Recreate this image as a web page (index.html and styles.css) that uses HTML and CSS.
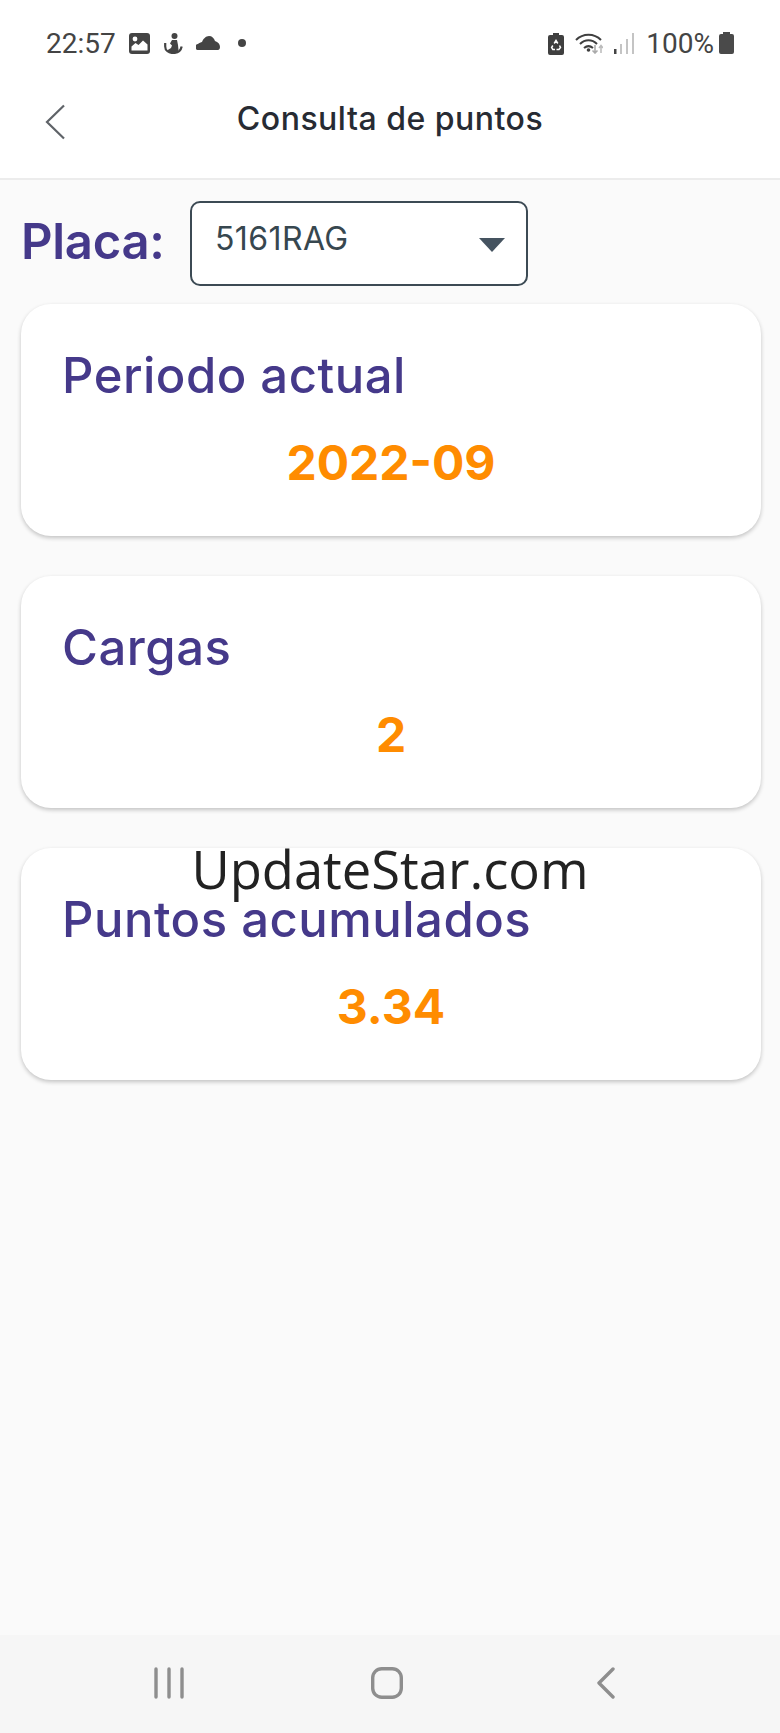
FILE: index.html
```html
<!DOCTYPE html>
<html lang="es">
<head>
<meta charset="utf-8">
<title>Consulta de puntos</title>
<link rel="stylesheet" href="styles.css">
</head>
<body>
<div class="phone">
  <div class="top">
    <div class="status">
      <div class="status-left">
        <span class="clock">22:57</span>
        <svg class="ic-image" width="21" height="21" viewBox="0 0 21 21"><rect width="21" height="21" rx="3" fill="#444"/><circle cx="6" cy="6" r="2.4" fill="#fff"/><path d="M2.500 17.500v-4l4-3.500 3 2 4.500-4.500 4.500 4v6z" fill="#fff"/></svg>
        <svg class="ic-anchor" width="19" height="21" viewBox="0 0 19 21"><circle cx="10.500" cy="3" r="3" fill="#444"/><path d="M8 7h5l1 5 .5 5-2 3H7l-4-2.500 4-2.500 1-2.500-2-2z" fill="#444"/><path d="M1.200 10v3.500c0 4 3.500 6.500 8 6.500s7.500-2 8.500-6.500" fill="none" stroke="#444" stroke-width="2.200"/></svg>
        <svg class="ic-cloud" width="24" height="14" viewBox="0 0 24 14"><path d="M3 14a3 3 0 0 1-1-6c1-1 3-2 4-2 1-3 4-6 7-6 3 0 5 2 6 5 3 1 5 3 5 6 0 2-1 3-2 3z" fill="#444"/></svg>
        <span class="dot"></span>
      </div>
      <div class="status-right">
        <svg class="ic-batsave" width="16" height="22" viewBox="0 0 16 22"><path d="M5 0h6v2h3a2 2 0 0 1 2 2v16a2 2 0 0 1-2 2H2a2 2 0 0 1-2-2V4a2 2 0 0 1 2-2h3z" fill="#3f3f3f"/><path d="M6.200 10.500 8 7.500l1.800 3M11.500 12.500l1 2-1.500 2H8.500M7 16.500H4.800l-1.200-2 1.200-2" fill="none" stroke="#fff" stroke-width="1.500"/></svg>
        <svg class="ic-wifi" width="28" height="22" viewBox="0 0 28 22"><path d="M1 8C8 1 19 1 26 8M5 12c5-5 12-5 17 0M9 16c3-2.500 6-2.500 9 0" fill="none" stroke="#3f3f3f" stroke-width="2"/><circle cx="13.500" cy="18" r="1.800" fill="#3f3f3f"/><path d="M20 13v8M17.500 18.500l2.500 2.500 2.500-2.500" fill="none" stroke="#aaa" stroke-width="1.600"/><path d="M26 21v-7M24 16l2-2.500 2 2.500" fill="none" stroke="#bbb" stroke-width="1.500"/></svg>
        <svg class="ic-signal" width="20" height="21" viewBox="0 0 20 21"><rect x="0" y="16" width="2.500" height="5" fill="#444"/><rect x="6" y="11" width="2" height="10" fill="#c4c4c4"/><rect x="12" y="6" width="2" height="15" fill="#c4c4c4"/><rect x="18" y="0" width="2" height="21" fill="#c4c4c4"/></svg>
        <span class="percent">100%</span>
        <svg class="ic-battery" width="15" height="22" viewBox="0 0 15 22"><path d="M4 0h7v2h2a2 2 0 0 1 2 2v16a2 2 0 0 1-2 2H2a2 2 0 0 1-2-2V4a2 2 0 0 1 2-2h2z" fill="#4a4a4a"/></svg>
      </div>
    </div>
    <header class="appbar">
      <svg class="back" width="20" height="36" viewBox="0 0 20 36"><path d="M19 1.500 2 18l17 16.500" fill="none" stroke="#5f6368" stroke-width="2.200"/></svg>
      <h1 class="title">Consulta de puntos</h1>
    </header>
  </div>

  <main class="content">
    <div class="plate-row">
      <span class="plate-label">Placa:</span>
      <div class="select">
        <span class="select-value">5161RAG</span>
        <span class="select-arrow"></span>
      </div>
    </div>

    <section class="card">
      <h2 class="card-title">Periodo actual</h2>
      <p class="card-value">2022-09</p>
    </section>
    <section class="card">
      <h2 class="card-title">Cargas</h2>
      <p class="card-value">2</p>
    </section>
    <section class="card">
      <h2 class="card-title">Puntos acumulados</h2>
      <p class="card-value">3.34</p>
    </section>
  </main>

  <nav class="navbar">
    <svg width="30" height="32" viewBox="0 0 30 32"><path d="M2 2v28M15 2v28M28 2v28" stroke="#8e8e8e" stroke-width="3.400" stroke-linecap="round" fill="none"/></svg>
    <svg width="32" height="32" viewBox="0 0 32 32"><rect x="1.700" y="1.700" width="28.600" height="28.600" rx="9" fill="none" stroke="#8e8e8e" stroke-width="3.400"/></svg>
    <svg width="20" height="32" viewBox="0 0 20 32"><path d="M17 2 3 16l14 14" fill="none" stroke="#8e8e8e" stroke-width="3.400" stroke-linecap="round" stroke-linejoin="round"/></svg>
  </nav>

  <div class="watermark">UpdateStar.com</div>
</div>
</body>
</html>
```

FILE: styles.css
```css
* { box-sizing: border-box; }
html, body { margin: 0; padding: 0; }
body { font-family: "Inter", "Liberation Sans", sans-serif; }

.phone {
  position: relative;
  width: 780px;
  height: 1733px;
  background: #fafafa;
  display: flex;
  flex-direction: column;
  overflow: hidden;
}

.top {
  height: 180px;
  background: #fff;
  border-bottom: 2px solid #ececec;
  flex: none;
}

.status {
  height: 87px;
  padding: 32px 46px 0 46px;
  display: flex;
  justify-content: space-between;
  align-items: flex-start;
}
.status-left, .status-right { display: flex; align-items: flex-start; }
.clock, .percent {
  font-family: "Roboto", sans-serif;
  font-size: 28px;
  line-height: 24px;
  color: #444;
}
.percent { margin-left: 12px; }
.ic-image { margin: 1px 0 0 13px; }
.ic-anchor { margin: 1px 0 0 14px; }
.ic-cloud { margin: 4px 0 0 13px; }
.dot { width: 8px; height: 8px; border-radius: 50%; background: #444; margin: 7px 0 0 18px; }
.ic-batsave { margin-top: 1px; }
.ic-wifi { margin-left: 11px; }
.ic-signal { margin: 1px 0 0 11px; }
.ic-battery { margin-left: 5px; }

.appbar {
  height: 91px;
  padding-left: 45px;
  position: relative;
  display: flex;
  align-items: flex-start;
}
.back { margin-top: 17px; }
.title {
  position: absolute;
  left: 0;
  right: 0;
  top: 12px;
  margin: 0;
  text-align: center;
  font-size: 32px;
  line-height: 40px;
  font-weight: 500;
  letter-spacing: 0.500px;
  color: #272b33;
}

.content { flex: 1; padding: 21px 19px 0 21px; }

.plate-row { display: flex; align-items: flex-start; height: 85px; margin-bottom: 18px; }
.plate-label {
  width: 169px;
  padding: 9px 0 0 0;
  font-size: 49px;
  line-height: 64px;
  font-weight: 600;
  letter-spacing: -0.300px;
  color: #45398a;
}
.select {
  width: 338px;
  height: 85px;
  background: #fff;
  border: 2px solid #3c4a54;
  border-radius: 10px;
  padding: 4px 21px 0 23px;
  display: flex;
  justify-content: space-between;
}
.select-value {
  font-size: 32px;
  line-height: 64px;
  height: 64px;
  letter-spacing: 0.400px;
  font-weight: 400;
  color: #37474f;
}
.select-arrow {
  margin-top: 31px;
  width: 0;
  height: 0;
  border-left: 13.500px solid transparent;
  border-right: 13.500px solid transparent;
  border-top: 14px solid #455360;
}

.card {
  height: 232px;
  background: #fff;
  border-radius: 30px;
  box-shadow: 0 2px 4px rgba(0, 0, 0, 0.22);
  padding: 42px 41px 0;
  margin-bottom: 40px;
}
.card-title {
  margin: 0;
  font-size: 49px;
  line-height: 60px;
  font-weight: 500;
  letter-spacing: 0.500px;
  color: #45398a;
}
.card-value {
  margin: 27px -20px 0 -20px;
  text-align: center;
  font-size: 48px;
  line-height: 60px;
  font-weight: 700;
  color: #ff8c00;
}

.navbar {
  height: 98px;
  flex: none;
  background: #f6f6f6;
  display: grid;
  grid-template-columns: 217px 225px 20px;
  padding: 32px 0 0 154px;
  align-items: start;
}

.watermark {
  position: absolute;
  left: 0;
  width: 780px;
  top: 833px;
  text-align: center;
  font-family: "Open Sans", sans-serif;
  font-size: 52.500px;
  line-height: 72px;
  color: #222;
}
```
